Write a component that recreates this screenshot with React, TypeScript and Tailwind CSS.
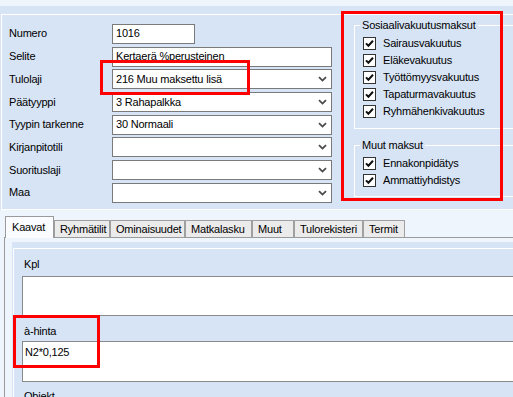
import React, { ReactElement, ReactNode } from 'react';

const Chevron = (): ReactElement => (
  <svg width="9" height="6" viewBox="0 0 9 6" className="mr-[4px] shrink-0">
    <path d="M1 1.2 L4.5 4.6 L8 1.2" fill="none" stroke="#4a4a4a" strokeWidth="1.8" />
  </svg>
);

const CheckBox = ({ label }: { label: string }): ReactElement => (
  <div className="flex h-[17px] items-center">
    <span className="flex h-[13px] w-[13px] items-center justify-center border border-[#333] bg-white">
      <svg width="11" height="11" viewBox="0 0 11 11">
        <path d="M2 5.4 L4.4 7.8 L9 2.8" fill="none" stroke="#111" strokeWidth="2" />
      </svg>
    </span>
    <span className="ml-[7px]">{label}</span>
  </div>
);

const Row = ({ label, children }: { label: string; children: ReactNode }): ReactElement => (
  <div className="flex h-[22.7px] items-center">
    <span className="w-[103px] shrink-0">{label}</span>
    {children}
  </div>
);

const Combo = ({ value = '' }: { value?: string }): ReactElement => (
  <div className="flex h-[20px] w-[220px] items-center justify-between border border-[#7a7a7a] bg-white pl-[3px]">
    <span>{value}</span>
    <Chevron />
  </div>
);

const tabs: { name: string; w: string }[] = [
  { name: 'Ryhmätilit', w: 'w-[56px]' },
  { name: 'Ominaisuudet', w: 'w-[75px]' },
  { name: 'Matkalasku', w: 'w-[67px]' },
  { name: 'Muut', w: 'w-[42px]' },
  { name: 'Tulorekisteri', w: 'w-[69px]' },
  { name: 'Termit', w: 'w-[42px]' },
];

const App = (): ReactElement => (
  <div
    className="relative h-[397px] w-[513px] overflow-hidden bg-[#eef5fd] text-[11px] leading-[13px] tracking-[-0.2px] text-black"
    style={{ fontFamily: '"Liberation Sans", Arial, sans-serif' }}
  >
    <div className="h-[6px]" />
    {/* main form panel */}
    <div className="bg-[#d7e4f5] pt-[8px]">
      <div className="ml-[1px] flex h-[196px] border-y border-l border-white">
        <div className="w-[330px] shrink-0 pl-[7px] pt-[7.6px]">
          <Row label="Numero">
            <div className="flex h-[20px] w-[83px] items-center border border-[#7a7a7a] bg-white pl-[3px]">1016</div>
          </Row>
          <Row label="Selite">
            <div className="flex h-[20px] w-[220px] items-center border border-[#7a7a7a] bg-white pl-[3px]">
              Kertaerä %perusteinen
            </div>
          </Row>
          <Row label="Tulolaji">
            <Combo value="216 Muu maksettu lisä" />
          </Row>
          <Row label="Päätyyppi">
            <Combo value="3 Rahapalkka" />
          </Row>
          <Row label="Tyypin tarkenne">
            <Combo value="30 Normaali" />
          </Row>
          <Row label="Kirjanpitotili">
            <Combo />
          </Row>
          <Row label="Suorituslaji">
            <Combo />
          </Row>
          <Row label="Maa">
            <Combo />
          </Row>
        </div>
        <div className="ml-[22px] w-[180px] shrink-0 pt-[3.5px]">
          <fieldset className="border border-white pb-[8px] pt-[3px]">
            <legend className="ml-[5px] px-[2px]">Sosiaalivakuutusmaksut</legend>
            <div className="pl-[8px]">
              <CheckBox label="Sairausvakuutus" />
              <CheckBox label="Eläkevakuutus" />
              <CheckBox label="Työttömyysvakuutus" />
              <CheckBox label="Tapaturmavakuutus" />
              <CheckBox label="Ryhmähenkivakuutus" />
            </div>
          </fieldset>
          <fieldset className="mt-[10.5px] border border-white pb-[7px] pt-[3px]">
            <legend className="ml-[5px] px-[2px]">Muut maksut</legend>
            <div className="pl-[8px]">
              <CheckBox label="Ennakonpidätys" />
              <CheckBox label="Ammattiyhdistys" />
            </div>
          </fieldset>
        </div>
      </div>
    </div>
    {/* tab strip */}
    <div className="flex h-[27px] items-end pl-[5px]">
      <div className="relative z-10 -mb-px h-[22px] w-[49px] border-x border-t border-[#9a9a9a] bg-[#fafcff] pl-[6px] pt-[4px]">
        Kaavat
      </div>
      {tabs.map((t) => (
        <div
          key={t.name}
          className={`${t.w} h-[17px] border-x border-t border-[#a0a0a0] bg-[#ebebeb] pl-[5px] pt-[2px]`}
        >
          {t.name}
        </div>
      ))}
    </div>
    {/* tab page */}
    <div className="ml-[4px] h-[200px] border-l border-t border-[#9a9a9a] pl-[7px] pt-[4px]">
      <div className="h-full bg-[#d7e4f5] pl-[1px] pt-[6px]">
        <div className="h-full border-l border-t border-white pl-[8px]">
          <div className="mt-[8.5px] h-[13px] pl-[2px]">Kpl</div>
          <div className="mt-[5.5px] h-[40px] w-[520px] border border-[#8a8a8a] bg-white" />
          <div className="mt-[8.5px] h-[13px] pl-[2px]">à-hinta</div>
          <div className="mt-[3.5px] h-[41px] w-[520px] border border-[#8a8a8a] bg-white pl-[2px] pt-[4px]">
            N2*0,125
          </div>
          <div className="mt-[8px] h-[13px] pl-[2px]">Objekt</div>
        </div>
      </div>
    </div>
    {/* red annotation boxes */}
    <div className="absolute left-[100px] top-[60px] h-[35px] w-[150px] border-[3px] border-[#ff0000]" />
    <div className="absolute left-[341px] top-[11px] h-[190px] w-[162px] border-[3px] border-[#ff0000]" />
    <div className="absolute left-[13px] top-[315px] h-[53px] w-[87px] border-[3px] border-[#ff0000]" />
  </div>
);

export default App;
